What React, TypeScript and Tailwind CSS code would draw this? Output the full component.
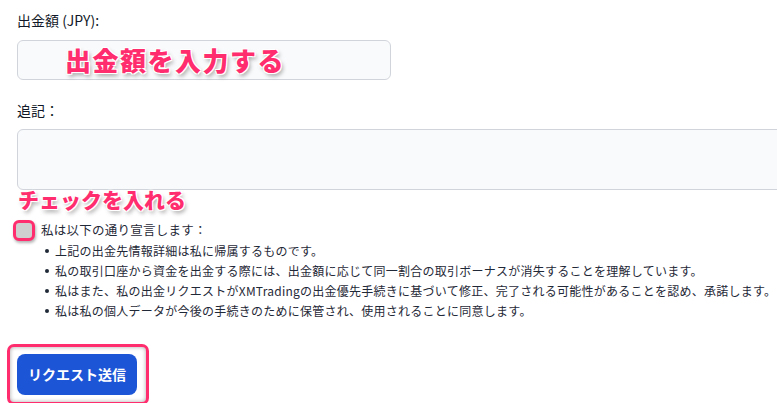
const font = { fontFamily: '"Noto Sans CJK JP", "Noto Sans", sans-serif' };

const pinkText =
  'font-black text-[#ff2d6e] [text-shadow:0_0_2px_#fff,1px_1px_0_#fff,-1px_-1px_0_#fff,1px_-1px_0_#fff,-1px_1px_0_#fff,2px_3px_4px_rgba(0,0,0,0.35)]';

const bullets = [
  '上記の出金先情報詳細は私に帰属するものです。',
  '私の取引口座から資金を出金する際には、出金額に応じて同一割合の取引ボーナスが消失することを理解しています。',
  '私はまた、私の出金リクエストがXMTradingの出金優先手続きに基づいて修正、完了される可能性があることを認め、承諾します。',
  '私は私の個人データが今後の手続きのために保管され、使用されることに同意します。',
];

export default function App() {
  return (
    <div style={font} className="relative h-[403px] w-[777px] overflow-hidden bg-white pl-[17px] text-[#111827]">
      <div className="pt-[10px] text-[14px] leading-[20px]">出金額 (JPY):</div>

      <div className="relative mt-[10px] h-[40px] w-[374px] rounded-md border border-[#d1d5db] bg-[#f9fafb]">
        <span className={`absolute left-[47px] top-[1px] whitespace-nowrap text-[26px] leading-[36px] tracking-[1.5px] ${pinkText}`}>
          出金額を入力する
        </span>
      </div>

      <div className="mt-[20px] text-[14px] leading-[20px]">追記：</div>

      <div className="relative mt-[9px] h-[61px] w-[790px] rounded-md border border-[#d1d5db] bg-[#f9fafb]">
        <span className={`absolute left-[0px] top-[55px] whitespace-nowrap text-[21px] leading-[28px] ${pinkText}`}>
          チェックを入れる
        </span>
      </div>

      <div className="mt-[30px] flex items-start">
        <div className="-ml-[4px] h-[21px] w-[22px] shrink-0 rounded-[6px] border-[3px] border-[#ff2d6e] bg-[#cfcfcf] shadow-[1px_2px_3px_rgba(0,0,0,0.3)]" />
        <div className="ml-[6px] whitespace-nowrap text-[12px] leading-[20px] tracking-[0.25px] text-[#1f2937]">
          <div className="text-[12.5px]">私は以下の通り宣言します：</div>
          <ul className="mt-[1px] pl-[4px]">
            {bullets.map((b) => (
              <li key={b} className="flex items-center leading-[20px]">
                <span className="mr-[6px] h-[4px] w-[4px] shrink-0 rounded-full bg-[#1f2937]" />
                <span>{b}</span>
              </li>
            ))}
          </ul>
        </div>
      </div>

      <div className="-ml-[10px] mt-[23px] w-[142px] rounded-[7px] border-[3px] border-[#ff2d6e] p-[7px] shadow-[inset_0_0_4px_rgba(0,0,0,0.35)]">
        <button className="h-[41px] w-[120px] rounded-lg bg-[#1c55d6] text-[14px] font-bold text-white">
          リクエスト送信
        </button>
      </div>
    </div>
  );
}
